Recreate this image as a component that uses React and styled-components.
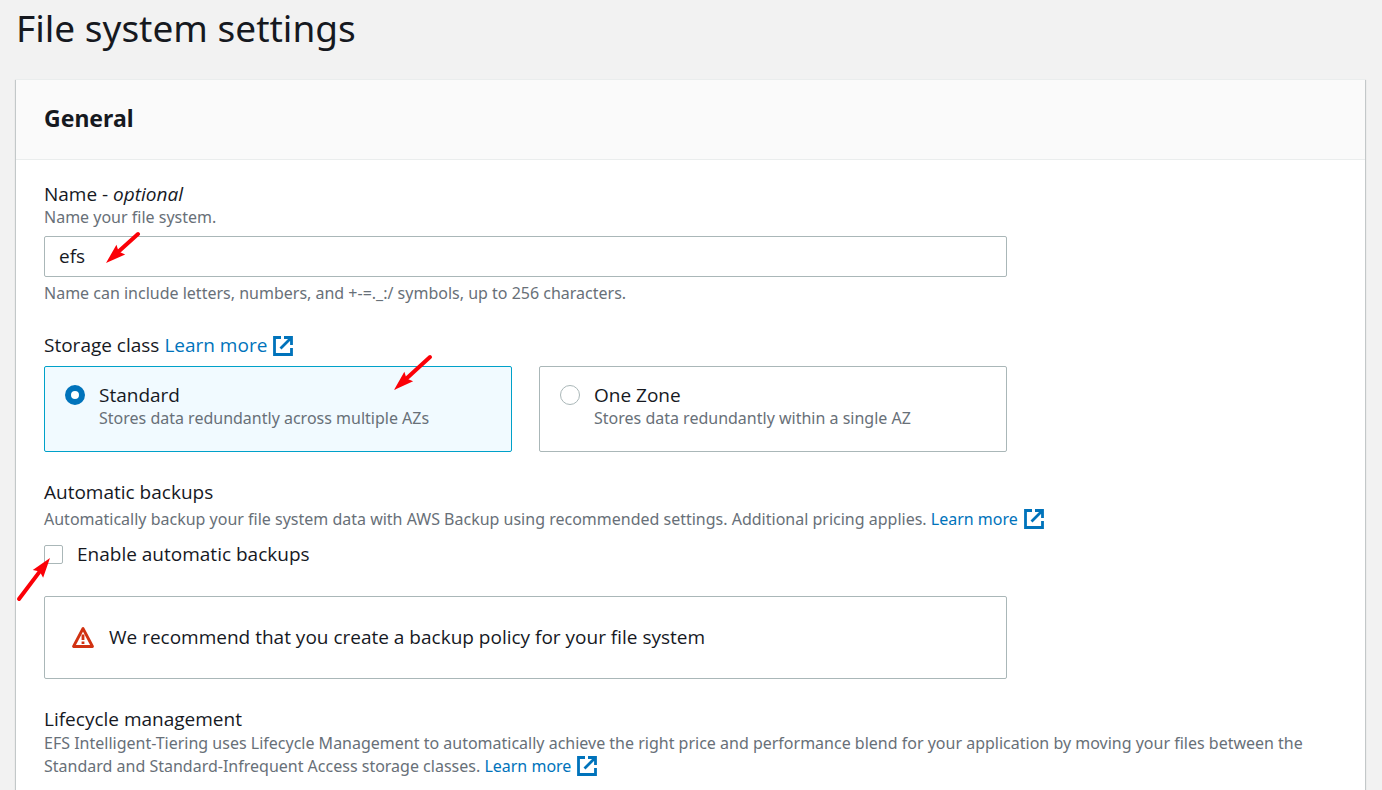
import React, { useState } from "react";
import styled, { createGlobalStyle } from "styled-components";

const color = {
  page: "#f2f2f2",
  header: "#fafafa",
  line: "#eaeded",
  border: "#aab7b8",
  text: "#16191f",
  muted: "#687078",
  link: "#0073bb",
  danger: "#d13212",
  mark: "#fb0007",
};

const GlobalStyle = createGlobalStyle`
  *, *::before, *::after { box-sizing: border-box; }
  body {
    margin: 0;
    background: ${color.page};
    color: ${color.text};
    font-family: "Open Sans", "Noto Sans", sans-serif;
    font-size: 19px;
    line-height: 24px;
  }
`;

const Page = styled.main`
  display: flex;
  flex-direction: column;
  min-height: 100vh;
  padding: 0 17px 0 16px;
`;

const PageTitle = styled.h1`
  margin: 4px 0 27px;
  font-family: "Noto Sans", sans-serif;
  font-size: 37px;
  font-weight: 400;
  line-height: 48px;
`;

const Panel = styled.section`
  flex: 1;
  background: #fff;
  border-top: 1px solid ${color.line};
  box-shadow: 0 1px 1px rgba(0, 28, 36, 0.3), 1px 1px 1px rgba(0, 28, 36, 0.15),
    -1px 1px 1px rgba(0, 28, 36, 0.15);
`;

const PanelHeader = styled.header`
  padding: 22px 28px 25px;
  background: ${color.header};
  border-bottom: 1px solid ${color.line};
`;

const PanelTitle = styled.h2`
  margin: 0;
  font-family: "Noto Sans", sans-serif;
  font-size: 23px;
  font-weight: 700;
  line-height: 32px;
`;

const PanelBody = styled.div`
  display: flex;
  flex-direction: column;
  gap: 28px;
  padding: 22px 28px 12px;
`;

const Field = styled.div`
  position: relative;
  max-width: 963px;
`;

const Section = styled.section`
  position: relative;
`;

const Label = styled.label`
  display: block;
`;

const Heading = styled.h3`
  margin: 0;
  font-size: 19px;
  font-weight: 400;
  line-height: 24px;
`;

const Description = styled.p`
  margin: ${(p) => p.$top || 0}px 0 0;
  color: ${color.muted};
  font-family: "Noto Sans", sans-serif;
  font-size: 16px;
  line-height: 23px;
`;

const TextInput = styled.input`
  display: block;
  width: 100%;
  height: 41px;
  margin-top: 7px;
  padding: 0 14px 1px;
  border: 1px solid ${color.border};
  border-radius: 2px;
  background: #fff;
  color: inherit;
  font: inherit;
`;

const Group = styled.fieldset`
  position: relative;
  max-width: 963px;
  min-width: 0;
  margin: 0;
  padding: 0;
  border: 0;
`;

const Legend = styled.legend`
  padding: 0;
`;

const Tiles = styled.div`
  display: grid;
  grid-template-columns: 1fr 1fr;
  gap: 27px;
  margin-top: 9px;
`;

const Tile = styled.label`
  display: grid;
  grid-template-columns: 20px 1fr;
  column-gap: 14px;
  align-items: start;
  min-height: 86px;
  padding: 16px 20px;
  border: 1px solid ${(p) => (p.$selected ? "#00a1c9" : color.border)};
  border-radius: 2px;
  background: ${(p) => (p.$selected ? "#f1faff" : "#fff")};
`;

const Radio = styled.input`
  appearance: none;
  width: 20px;
  height: 20px;
  margin: 2px 0 0;
  border: 1px solid ${color.border};
  border-radius: 50%;
  background: #fff;
  &:checked {
    border: 6px solid ${color.link};
  }
`;

const TileText = styled.span`
  display: block;
`;

const TileHint = styled.span`
  display: block;
  color: ${color.muted};
  font-family: "Noto Sans", sans-serif;
  font-size: 16px;
  line-height: 23px;
`;

const CheckRow = styled.label`
  display: flex;
  align-items: center;
  gap: 14px;
  width: fit-content;
  margin-top: 11px;
`;

const Checkbox = styled.input`
  appearance: none;
  width: 19px;
  height: 19px;
  margin: 0;
  border: 1px solid ${color.border};
  border-radius: 2px;
  background: #fff;
  &:checked {
    border: 5px solid ${color.link};
  }
`;

const Alert = styled.div`
  display: flex;
  align-items: center;
  gap: 14px;
  max-width: 963px;
  min-height: 83px;
  margin-top: 2px;
  padding: 0 26px 2px;
  border: 1px solid ${color.border};
  border-radius: 2px;
`;

const Link = styled.a`
  color: ${color.link};
  text-decoration: none;
  white-space: nowrap;
  svg {
    margin: -4px 0 -4px 5px;
    vertical-align: -1px;
  }
`;

const Mark = styled.svg`
  position: absolute;
  left: ${(p) => p.$x}px;
  top: ${(p) => p.$y}px;
  pointer-events: none;
`;

function LearnMore() {
  return (
    <Link href="#learn-more">
      Learn more
      <svg width="22" height="22" viewBox="0 0 22 22" fill="none" stroke="currentColor" strokeWidth="2.8" aria-hidden="true">
        <path d="M9 2.5H2.5v17h17V13" />
        <path d="M12 2.5h7.5V10M19 3L8.5 13.5" />
      </svg>
    </Link>
  );
}

function WarningIcon() {
  return (
    <svg width="24" height="24" viewBox="0 0 24 24" fill="none" stroke={color.danger} aria-hidden="true">
      <path d="M12 3.5L2.5 21.5h19z" strokeWidth="2.8" strokeLinejoin="round" />
      <path d="M12 9.5v5.5M12 16.5v2.5" strokeWidth="2.8" />
    </svg>
  );
}

function Arrow({ x, y, dx, dy }) {
  const length = Math.hypot(dx, dy);
  const angle = (Math.atan2(dy, dx) * 180) / Math.PI;
  const left = Math.min(0, dx);
  const top = Math.min(0, dy);
  const pad = 8;
  return (
    <Mark
      $x={x + left - pad}
      $y={y + top - pad}
      width={Math.abs(dx) + pad * 2}
      height={Math.abs(dy) + pad * 2}
      aria-hidden="true"
    >
      <g transform={`translate(${pad - left} ${pad - top}) rotate(${angle})`} fill={color.mark}>
        <path d={`M0 0H${length - 14}`} stroke={color.mark} strokeWidth="4" strokeLinecap="round" />
        <path d={`M${length} 0L${length - 20} -6.5L${length - 17} 0L${length - 20} 6.5Z`} />
      </g>
    </Mark>
  );
}

const storageClasses = [
  { id: "standard", title: "Standard", hint: "Stores data redundantly across multiple AZs" },
  { id: "one-zone", title: "One Zone", hint: "Stores data redundantly within a single AZ" },
];

export default function App() {
  const [name, setName] = useState("efs");
  const [storage, setStorage] = useState("standard");
  const [backups, setBackups] = useState(false);

  return (
    <>
      <GlobalStyle />
      <Page>
        <PageTitle>File system settings</PageTitle>
        <Panel>
          <PanelHeader>
            <PanelTitle>General</PanelTitle>
          </PanelHeader>
          <PanelBody>
            <Field>
              <Label htmlFor="fs-name">
                Name - <em>optional</em>
              </Label>
              <Description>Name your file system.</Description>
              <TextInput id="fs-name" type="text" value={name} onChange={(e) => setName(e.target.value)} />
              <Description $top={5}>
                Name can include letters, numbers, and +-=._:/ symbols, up to 256 characters.
              </Description>
              <Arrow x={94} y={52} dx={-32} dy={29} />
            </Field>

            <Group>
              <Legend>
                Storage class <LearnMore />
              </Legend>
              <Tiles>
                {storageClasses.map((item) => (
                  <Tile key={item.id} $selected={storage === item.id}>
                    <Radio
                      type="radio"
                      name="storage"
                      checked={storage === item.id}
                      onChange={() => setStorage(item.id)}
                    />
                    <TileText>
                      {item.title}
                      <TileHint>{item.hint}</TileHint>
                    </TileText>
                  </Tile>
                ))}
              </Tiles>
              <Arrow x={386} y={0} dx={-36} dy={33} />
            </Group>

            <Section>
              <Heading>Automatic backups</Heading>
              <Description $top={4}>
                Automatically backup your file system data with AWS Backup using recommended settings. Additional
                pricing applies. <LearnMore />
              </Description>
              <CheckRow>
                <Checkbox type="checkbox" checked={backups} onChange={(e) => setBackups(e.target.checked)} />
                Enable automatic backups
              </CheckRow>
              <Arrow x={-25} y={119} dx={31} dy={-41} />
            </Section>

            <Alert role="status">
              <WarningIcon />
              We recommend that you create a backup policy for your file system
            </Alert>

            <Section>
              <Heading>Lifecycle management</Heading>
              <Description $top={1}>
                EFS Intelligent-Tiering uses Lifecycle Management to automatically achieve the right price and
                performance blend for your application by moving your files between the Standard and
                Standard-Infrequent Access storage classes. <LearnMore />
              </Description>
            </Section>
          </PanelBody>
        </Panel>
      </Page>
    </>
  );
}
